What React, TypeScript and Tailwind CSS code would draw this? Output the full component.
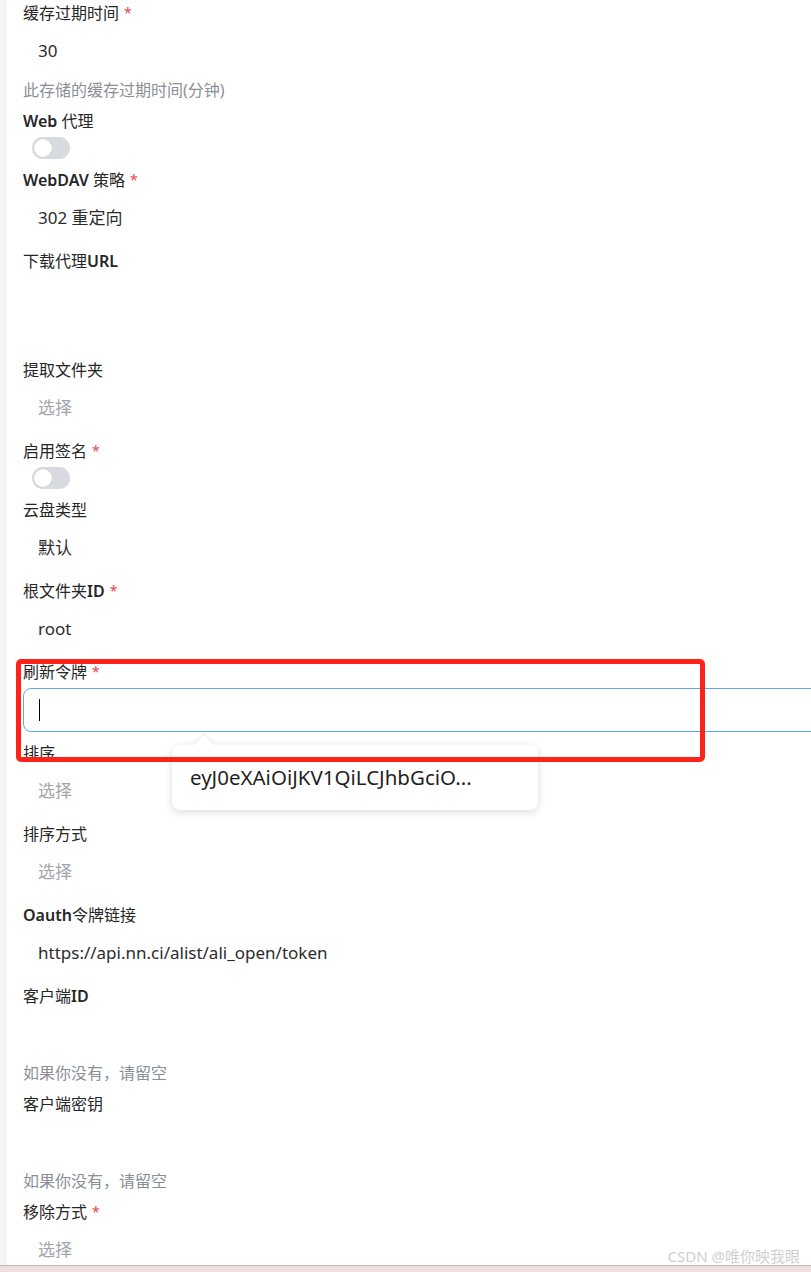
import React from "react";

type Field = {
  label: React.ReactNode;
  required?: boolean;
  kind: "input" | "switch" | "textarea";
  value?: string;
  placeholder?: string;
  help?: string;
  focused?: boolean;
};

const B = ({ children }: { children: React.ReactNode }) => (
  <span className="font-semibold">{children}</span>
);

const fields: Field[] = [
  { label: "缓存过期时间", required: true, kind: "input", value: "30", help: "此存储的缓存过期时间(分钟)" },
  { label: <><B>Web</B> 代理</>, kind: "switch" },
  { label: <><B>WebDAV</B> 策略</>, required: true, kind: "input", value: "302 重定向" },
  { label: <>下载代理<B>URL</B></>, kind: "textarea" },
  { label: "提取文件夹", kind: "input", placeholder: "选择" },
  { label: "启用签名", required: true, kind: "switch" },
  { label: "云盘类型", kind: "input", value: "默认" },
  { label: <>根文件夹<B>ID</B></>, required: true, kind: "input", value: "root" },
  { label: "刷新令牌", required: true, kind: "input", value: "", focused: true },
  { label: "排序", kind: "input", placeholder: "选择" },
  { label: "排序方式", kind: "input", placeholder: "选择" },
  { label: <><B>Oauth</B>令牌链接</>, kind: "input", value: "https://api.nn.ci/alist/ali_open/token" },
  { label: <>客户端<B>ID</B></>, kind: "input", value: "", help: "如果你没有，请留空" },
  { label: "客户端密钥", kind: "input", value: "", help: "如果你没有，请留空" },
  { label: "移除方式", required: true, kind: "input", placeholder: "选择" },
];

const FormField = ({ f }: { f: Field }) => (
  <div className="pb-[9px]">
    <div className="flex h-6 items-center text-[16px] leading-6 text-[#262626]">
      <span>{f.label}</span>
      {f.required && <span className="ml-[5px] text-[14px] text-[#e5484d]">*</span>}
    </div>
    {f.kind === "switch" && (
      <div className="ml-[9px] mt-1 flex h-[22px] w-[38px] items-center rounded-full bg-[#d7dade] px-[2px]">
        <div className="h-[18px] w-[18px] rounded-full bg-white shadow-[0_0_1px_rgba(0,0,0,0.2)]" />
      </div>
    )}
    {f.kind === "textarea" && <div className="mt-1 h-[72px] w-full" />}
    {f.kind === "input" && (
      <div
        className={
          "mt-1 flex h-[44px] w-full items-center rounded-[8px] px-[15px] text-[17px] " +
          (f.focused ? "border border-[#5aa7ee] px-[14px]" : "")
        }
      >
        {f.focused && <div className="h-[22px] w-px bg-black" />}
        {f.value && <span className="text-[#2b2b2b]">{f.value}</span>}
        {f.placeholder && <span className="text-[#a2a6ab]">{f.placeholder}</span>}
      </div>
    )}
    {f.help && (
      <div className="mt-[7px] h-5 text-[16px] leading-5 text-[#8b9096]">{f.help}</div>
    )}
  </div>
);

export default function App() {
  return (
    <div
      className="relative flex h-[1272px] w-[811px] flex-col overflow-hidden bg-white"
      style={{ fontFamily: '"Noto Sans", "Noto Sans CJK SC", sans-serif' }}
    >
      <div className="flex h-[1265px] overflow-hidden">
        <div className="w-[6px] shrink-0 border-r border-[#ececee] bg-[#f6f6f7]" />
        <div className="w-[900px] shrink-0 pl-[17px] pt-[1px]">
          {fields.map((f, i) => (
            <FormField key={i} f={f} />
          ))}
        </div>
      </div>
      <div className="h-px bg-[#c4b8b8]" />
      <div className="flex-1 bg-[#f0dede]" />

      {/* token suggestion popover */}
      <div className="absolute left-[172px] top-[745px] flex h-[65px] w-[366px] items-center rounded-[8px] bg-white pl-[18px] text-[20.5px] text-[#1f1f1f] shadow-[0_2px_8px_rgba(0,0,0,0.15)]">
        eyJ0eXAiOiJKV1QiLCJhbGciO...
        <div className="absolute left-[25px] top-[-7px] h-[14px] w-[14px] rotate-45 bg-white shadow-[-2px_-2px_3px_rgba(0,0,0,0.06)]" />
      </div>

      {/* annotation */}
      <div className="absolute left-[16px] top-[659px] h-[103px] w-[689px] rounded-[5px] border-[5px] border-[#fd2318]" />

      <div className="absolute right-[11px] top-[1245px] text-[15px] text-[#cfcfcf]">CSDN @唯你映我眼</div>
    </div>
  );
}
